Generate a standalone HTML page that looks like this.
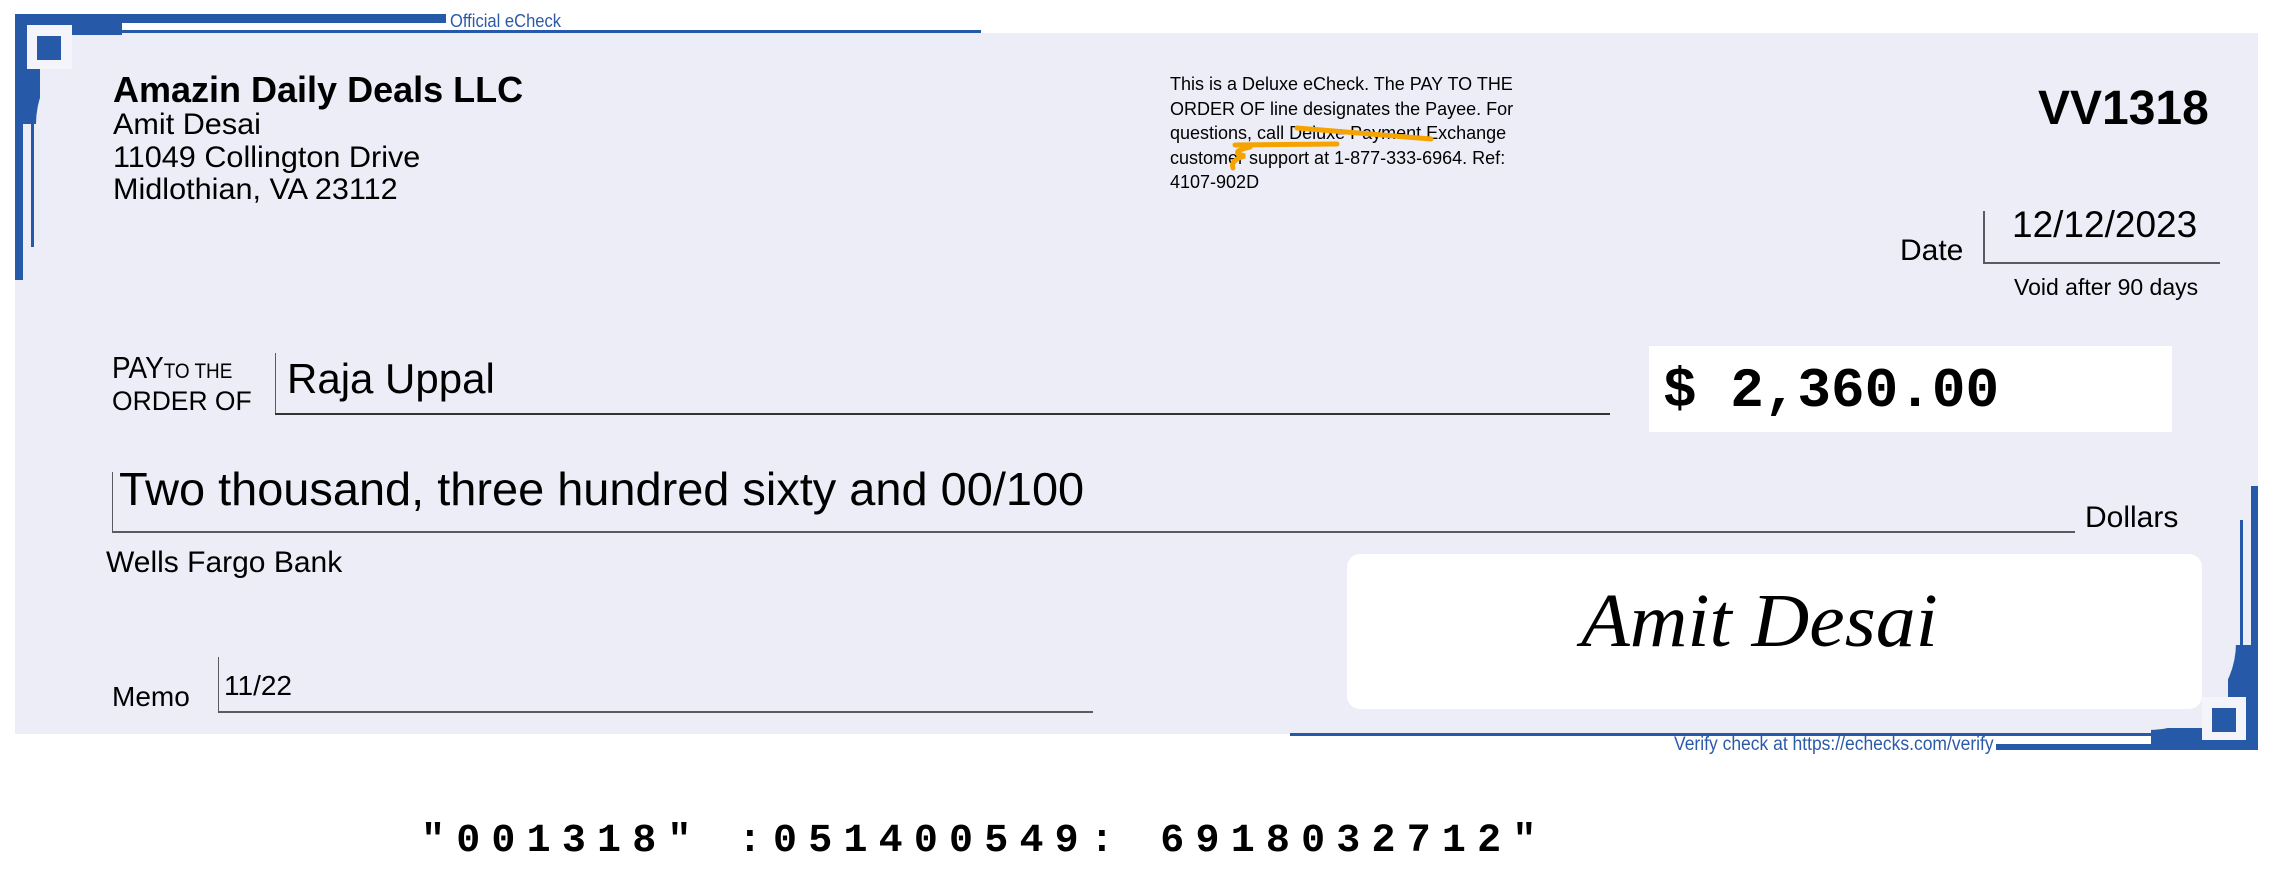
<!DOCTYPE html>
<html><head><meta charset="utf-8"><style>
html,body{margin:0;padding:0;background:#fff;}
body{width:2278px;height:896px;position:relative;overflow:hidden;font-family:"Liberation Sans",sans-serif;color:#000;}
.a{position:absolute;white-space:nowrap;line-height:1;}
.ln{position:absolute;background:#5a5a60;}
</style></head><body>
<svg class="a" style="left:0;top:0" width="2278" height="896">
<rect x="15" y="33" width="2243" height="701" fill="#ecedf7"/>
<rect x="15" y="14" width="107" height="21" fill="#2659a8"/>
<rect x="15" y="14" width="25" height="110" fill="#2659a8"/>
<rect x="15" y="14" width="8" height="266" fill="#2659a8"/>
<circle cx="124" cy="124" r="88" fill="#ecedf7"/>
<rect x="27" y="25" width="45" height="44" fill="#f4f4fa"/>
<rect x="37" y="36" width="24" height="24" fill="#2659a8"/>
<rect x="31" y="122" width="3" height="125" fill="#2659a8"/>
<rect x="122" y="14" width="324" height="9" fill="#2659a8"/>
<rect x="122" y="30" width="859" height="3" fill="#2659a8"/>
<rect x="1290" y="733" width="862" height="3" fill="#2659a8"/>
<rect x="1992" y="744" width="266" height="6" fill="#2659a8"/>
<rect x="2228" y="645" width="30" height="105" fill="#2659a8"/>
<rect x="2151" y="728" width="107" height="22" fill="#2659a8"/>
<rect x="2251" y="486" width="7" height="264" fill="#2659a8"/>
<circle cx="2149" cy="643" r="87" fill="#ecedf7"/>
<rect x="2202" y="697" width="44" height="43" fill="#f4f4fa"/>
<rect x="2212" y="708" width="24" height="24" fill="#2659a8"/>
<rect x="2240" y="520" width="3" height="125" fill="#2659a8"/>
<rect x="1670" y="740" width="326" height="12" fill="#fff"/>
<rect x="1649" y="346" width="523" height="86" fill="#fff"/>
<rect x="1347" y="554" width="855" height="155" rx="13" fill="#fff"/>
</svg>
<div class="a" style="left:450px;top:12px;font-size:18px;color:#2b5aa8;transform:scaleX(0.92);transform-origin:left">Official eCheck</div>
<div class="a" style="left:1674px;top:735px;font-size:19px;color:#2b5aa8;transform:scaleX(0.92);transform-origin:left">Verify check at https://echecks.com/verify</div>

<div class="a" style="left:113px;top:72px;font-size:36px;font-weight:bold">Amazin Daily Deals LLC</div>
<div class="a" style="left:113px;top:109px;font-size:30px;line-height:32.5px;white-space:pre;transform:scaleX(1.02);transform-origin:left">Amit Desai
11049 Collington Drive
Midlothian, VA 23112</div>

<div class="a" style="left:1170px;top:72px;font-size:18px;line-height:24.5px;white-space:pre">This is a Deluxe eCheck. The PAY TO THE
ORDER OF line designates the Payee. For
questions, call Deluxe Payment Exchange
customer support at 1-877-333-6964. Ref:
4107-902D</div>
<svg class="a" style="left:0;top:0" width="1500" height="200"><g fill="none" stroke="#f5a300" stroke-width="5" stroke-linecap="round">
<path d="M1297,128 L1431,139"/><path d="M1235,145 L1337,144"/><path d="M1250,147 Q1228,152 1245,156 Q1230,160 1233,168"/></g></svg>

<div class="a" style="left:2038px;top:85px;font-size:48px;font-weight:bold">VV1318</div>
<div class="a" style="left:1900px;top:236px;font-size:30px">Date</div>
<div class="ln" style="left:1983px;top:211px;width:2px;height:53px"></div>
<div class="ln" style="left:1983px;top:262px;width:237px;height:2px"></div>
<div class="a" style="left:2012px;top:206px;font-size:37px">12/12/2023</div>
<div class="a" style="left:2014px;top:276px;font-size:23px">Void after 90 days</div>

<div class="a" style="left:112px;top:352px;font-size:31px;transform:scaleX(0.9);transform-origin:left">PAY<span style="font-size:21px">TO THE</span></div>
<div class="a" style="left:112px;top:388px;font-size:27px;transform:scaleX(0.98);transform-origin:left">ORDER OF</div>
<div class="ln" style="left:275px;top:353px;width:1px;height:62px"></div>
<div class="ln" style="left:275px;top:413px;width:1335px;height:2px;background:#333"></div>
<div class="a" style="left:287px;top:358px;font-size:42px">Raja Uppal</div>

<div class="a" style="left:1663px;top:363px;font-size:56px;font-weight:bold;font-family:'Liberation Mono',monospace">$ 2,360.00</div>

<div class="ln" style="left:112px;top:472px;width:1px;height:60px"></div>
<div class="ln" style="left:112px;top:531px;width:1963px;height:2px"></div>
<div class="a" style="left:119px;top:466px;font-size:46px;transform:scaleX(1.02);transform-origin:left">Two thousand, three hundred sixty and 00/100</div>
<div class="a" style="left:2085px;top:503px;font-size:30px">Dollars</div>

<div class="a" style="left:106px;top:548px;font-size:30px">Wells Fargo Bank</div>
<div class="a" style="left:112px;top:683px;font-size:28px">Memo</div>
<div class="ln" style="left:218px;top:657px;width:1px;height:55px"></div>
<div class="ln" style="left:218px;top:711px;width:875px;height:2px"></div>
<div class="a" style="left:224px;top:672px;font-size:28px">11/22</div>

<div class="a" style="left:1581px;top:583px;font-size:76px;font-family:'Liberation Serif',serif;font-style:italic;transform:scaleX(1.05);transform-origin:left">Amit Desai</div>

<div class="a" style="left:421px;top:822px;font-size:40px;font-weight:bold;font-family:'Liberation Mono',monospace;letter-spacing:11.2px">"001318" :051400549: 6918032712"</div>
</body></html>
